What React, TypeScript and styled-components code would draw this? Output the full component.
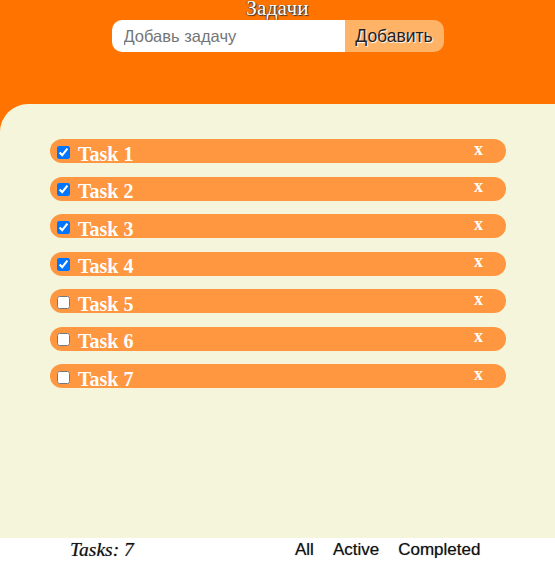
import React, { useState } from 'react';
import styled, { createGlobalStyle } from 'styled-components';

const GlobalStyle = createGlobalStyle`
  body {
    margin: 0;
    background: #ffffff;
  }
`;

const Page = styled.div`
  width: 555px;
  height: 562px;
  background: #ff7300;
  display: flex;
  flex-direction: column;
  overflow: hidden;
`;

const Header = styled.header`
  height: 104px;
  display: flex;
  flex-direction: column;
  align-items: center;
`;

const Title = styled.h1`
  margin: 0;
  font-family: 'Liberation Serif', serif;
  font-weight: normal;
  font-size: 21px;
  line-height: 16px;
  letter-spacing: 0.3px;
  color: #ffffff;
  text-shadow: 1px 1px 1px #333, -1px 0 1px #555;
`;

const Form = styled.form`
  display: flex;
  margin-top: 4px;
`;

const Input = styled.input`
  width: 233px;
  height: 32px;
  box-sizing: border-box;
  border: none;
  outline: none;
  border-radius: 10px 0 0 10px;
  padding: 0 12px;
  font-family: 'Liberation Sans', sans-serif;
  font-size: 16.5px;
  background: #ffffff;
  &::placeholder {
    color: #757575;
  }
`;

const AddButton = styled.button`
  width: 99px;
  height: 32px;
  border: none;
  border-radius: 0 10px 10px 0;
  background: #ffb366;
  font-family: 'Liberation Sans', sans-serif;
  font-size: 17.5px;
  color: #222;
  text-shadow: 1px 1px 1px #fff;
  padding: 0;
`;

const Main = styled.main`
  height: 434px;
  background: #f5f5dc;
  border-top-left-radius: 28px;
  padding: 35px 49px 0 50px;
  box-sizing: border-box;
`;

const List = styled.ul`
  margin: 0;
  padding: 0;
  list-style: none;
  display: flex;
  flex-direction: column;
  gap: 13.5px;
`;

const Row = styled.li`
  height: 24px;
  border-radius: 12px;
  background: #ff9640;
  display: flex;
  align-items: center;
  padding: 0 23px 0 3px;
`;

const Check = styled.input`
  width: 13px;
  height: 13px;
  margin: 2px 8px 0 4px;
  accent-color: #0075ff;
`;

const TaskName = styled.span`
  flex: 1;
  font-family: 'Liberation Serif', serif;
  font-weight: bold;
  font-size: 20px;
  color: #ffffff;
  padding-top: 6px;
`;

const Remove = styled.button`
  border: none;
  background: none;
  padding: 0;
  font-family: 'Liberation Serif', serif;
  font-weight: bold;
  font-size: 18px;
  color: #ffffff;
  margin-top: -4px;
`;

const Footer = styled.footer`
  height: 24px;
  background: #ffffff;
  display: flex;
  align-items: center;
  padding-left: 70px;
`;

const Count = styled.span`
  width: 225px;
  font-family: 'Liberation Serif', serif;
  font-style: italic;
  font-size: 19.5px;
  color: #111;
  text-shadow: 0 0 1px #888;
`;

const Filters = styled.div`
  display: flex;
  gap: 19px;
`;

const Filter = styled.button`
  border: none;
  background: none;
  padding: 0;
  font-family: 'Liberation Sans', sans-serif;
  font-size: 17px;
  color: #111;
  text-shadow: 0 0 1px #888;
`;

const initial = [1, 2, 3, 4, 5, 6, 7].map((n) => ({ id: n, title: `Task ${n}`, done: n <= 4 }));

export default function App() {
  const [tasks, setTasks] = useState(initial);

  const toggle = (id: number) =>
    setTasks(tasks.map((t) => (t.id === id ? { ...t, done: !t.done } : t)));

  return (
    <>
      <GlobalStyle />
      <Page>
        <Header>
          <Title>Задачи</Title>
          <Form onSubmit={(e) => e.preventDefault()}>
            <Input placeholder="Добавь задачу" />
            <AddButton type="submit">Добавить</AddButton>
          </Form>
        </Header>
        <Main>
          <List>
            {tasks.map((t) => (
              <Row key={t.id}>
                <Check type="checkbox" checked={t.done} onChange={() => toggle(t.id)} />
                <TaskName>{t.title}</TaskName>
                <Remove>x</Remove>
              </Row>
            ))}
          </List>
        </Main>
        <Footer>
          <Count>Tasks: {tasks.length}</Count>
          <Filters>
            <Filter>All</Filter>
            <Filter>Active</Filter>
            <Filter>Completed</Filter>
          </Filters>
        </Footer>
      </Page>
    </>
  );
}
